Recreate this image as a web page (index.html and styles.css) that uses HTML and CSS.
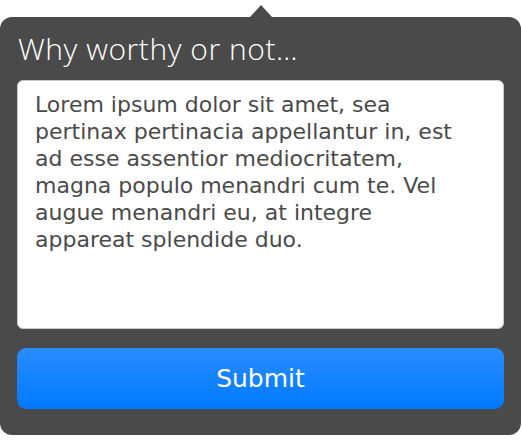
FILE: index.html
```html
<!DOCTYPE html>
<html>
<head>
<meta charset="utf-8">
<link rel="stylesheet" href="styles.css">
</head>
<body>
<div class="popover">
  <div class="arrow"></div>
  <div class="panel">
    <h1 class="title">Why worthy or not…</h1>
    <div class="textbox">Lorem ipsum dolor sit amet, sea pertinax pertinacia appellantur in, est ad esse assentior mediocritatem, magna populo menandri cum te. Vel augue menandri eu, at integre appareat splendide duo.</div>
    <button class="submit">Submit</button>
  </div>
</div>
</body>
</html>
```
FILE: styles.css
```css
html, body {
  margin: 0;
  padding: 0;
  background: #ffffff;
}
.popover {
  position: relative;
  width: 521px;
  padding-top: 17px;
}
.arrow {
  position: absolute;
  left: 250px;
  top: 5px;
  width: 0;
  height: 0;
  border-left: 11px solid transparent;
  border-right: 11px solid transparent;
  border-bottom: 12px solid #4a4a4a;
}
.panel {
  background: #4a4a4a;
  border-radius: 12px;
  height: 418px;
  box-sizing: border-box;
  padding: 14px 17px 0 17px;
  display: flex;
  flex-direction: column;
}
.title {
  margin: 0 0 0 1px;
  font-family: "Open Sans", "Lato", sans-serif;
  font-weight: 300;
  font-size: 30px;
  line-height: 36px;
  color: #ffffff;
  height: 49px;
  letter-spacing: 0.55px;
  white-space: nowrap;
}
.textbox {
  background: #ffffff;
  border: 1px solid #c8c8c8;
  border-radius: 6px;
  height: 249px;
  box-sizing: border-box;
  padding: 10px 28px 0 17px;
  font-family: "DejaVu Sans", "Liberation Sans", sans-serif;
  font-size: 22px;
  line-height: 27px;
  color: #4a4a4a;
}
.submit {
  margin-top: 19px;
  height: 61px;
  border: none;
  border-radius: 9px;
  background: linear-gradient(#2a8dff, #0079ff);
  color: #ffffff;
  font-family: "DejaVu Sans", "Liberation Sans", sans-serif;
  font-size: 25px;
  padding: 0;
}
```
